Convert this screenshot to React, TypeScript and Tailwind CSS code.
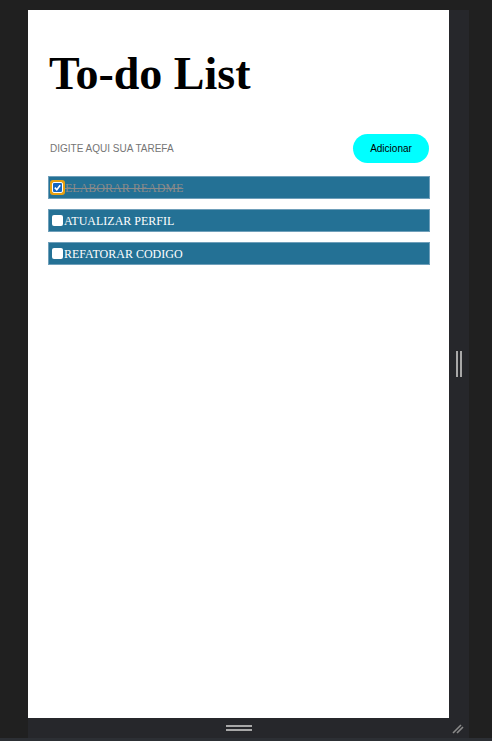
import React, { useState } from "react";

const tasks = [
  { id: 1, text: "ELABORAR README", done: true },
  { id: 2, text: "ATUALIZAR PERFIL", done: false },
  { id: 3, text: "REFATORAR CODIGO", done: false },
];

const TaskItem = ({
  text,
  done,
  onToggle,
}: {
  text: string;
  done: boolean;
  onToggle: () => void;
}) => {
  return (
    <li className="flex items-center h-[23px] bg-[#247195] border border-[#6f9fba] pl-[1px]">
      {done ? (
        <span className="flex items-center justify-center w-[15px] h-[15px] rounded-[3px] bg-[#e8a010]">
          <span className="flex items-center justify-center w-[11px] h-[11px] rounded-[2px] bg-[#1565c0] border border-white">
            <svg width="9" height="9" viewBox="0 0 10 10">
              <path d="M2 5.2 L4.2 7.4 L8 2.6" stroke="white" strokeWidth="1.8" fill="none" />
            </svg>
          </span>
        </span>
      ) : (
        <span
          onClick={onToggle}
          className="w-[11px] h-[11px] bg-white rounded-[2px] ml-[2px] mr-[1px]"
        />
      )}
      <span
        className={
          done
            ? "text-[12px] text-[#8a8a8a] line-through leading-none"
            : "text-[12px] text-white leading-none"
        }
        style={{ fontFamily: "'Liberation Serif', serif" }}
      >
        {text}
      </span>
    </li>
  );
};

export default function App() {
  const [list, setList] = useState(tasks);

  return (
    <div className="w-[492px] h-[741px] bg-[#202020] flex flex-col overflow-hidden">
      <div className="flex pl-[28px] pt-[10px]">
        <div className="flex flex-col">
          <div className="flex">
            <main className="w-[421px] h-[708px] bg-white px-[20px] pt-[41px]">
              <h1
                className="text-[46px] font-bold leading-none text-black ml-[1px]"
                style={{ fontFamily: "'Liberation Serif', serif" }}
              >
                To-do List
              </h1>
              <div className="flex items-center justify-between mt-[37px] pl-[2px]">
                <span
                  className="text-[10px] text-[#757575]"
                  style={{ fontFamily: "'Liberation Sans', sans-serif" }}
                >
                  DIGITE AQUI SUA TAREFA
                </span>
                <button
                  className="w-[76px] h-[29px] rounded-full bg-[#00ffff] text-[10px] text-black"
                  style={{ fontFamily: "'Liberation Sans', sans-serif" }}
                >
                  Adicionar
                </button>
              </div>
              <ul className="flex flex-col gap-[10px] mt-[13px] w-[382px]">
                {list.map((t) => (
                  <TaskItem
                    key={t.id}
                    text={t.text}
                    done={t.done}
                    onToggle={() =>
                      setList(list.map((x) => (x.id === t.id ? { ...x, done: !x.done } : x)))
                    }
                  />
                ))}
              </ul>
            </main>
            <div className="w-[20px] h-[708px] bg-[#26272b] flex items-center justify-center gap-[2px]">
              <span className="w-[2px] h-[26px] bg-[#a8a8a8]" />
              <span className="w-[2px] h-[26px] bg-[#a8a8a8]" />
            </div>
          </div>
          <div className="w-[441px] h-[20px] bg-[#26272b] flex items-center relative">
            <div className="flex flex-col gap-[2px] ml-[198px]">
              <span className="w-[26px] h-[2px] bg-[#a8a8a8]" />
              <span className="w-[26px] h-[2px] bg-[#a8a8a8]" />
            </div>
            <svg className="absolute right-[4px] top-[3px]" width="14" height="14" viewBox="0 0 14 14">
              <path d="M2 12 L10 4 M6 12 L12 6" stroke="#8a8a8a" strokeWidth="1.6" />
            </svg>
          </div>
        </div>
      </div>
      <div className="mt-auto h-[3px] bg-[#2c2f34]" />
    </div>
  );
}
